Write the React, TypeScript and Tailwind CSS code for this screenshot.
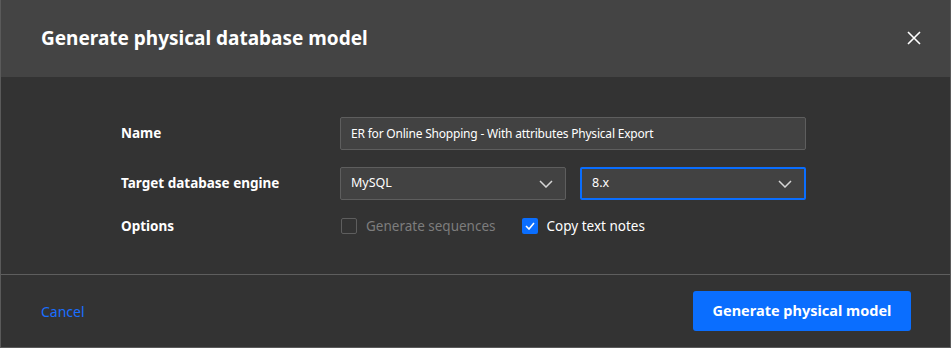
import React, { useState } from 'react';

const font = { fontFamily: '"Noto Sans", "Open Sans", sans-serif' };

function Chevron() {
  return (
    <svg width="14" height="8" viewBox="0 0 14 8" fill="none">
      <path d="M1 1l6 6 6-6" stroke="#d6d6d6" strokeWidth="1.5" />
    </svg>
  );
}

function Select({ value, focused }: { value: string; focused?: boolean }) {
  return (
    <div
      className={`flex h-[33px] w-[226px] items-center justify-between rounded-[2px] bg-[#424242] pl-[10px] pr-[12px] text-[12.5px] text-white ${
        focused ? 'border-2 border-[#0a6eff] pl-[9px] pr-[11px]' : 'border border-[#5e5e5e]'
      }`}
    >
      <span>{value}</span>
      <Chevron />
    </div>
  );
}

export default function App() {
  const [copyNotes, setCopyNotes] = useState(true);

  return (
    <div style={font} className="h-[348px] w-[951px] border-x border-b border-[#5a5a5a] bg-[#333333]">
      {/* Header */}
      <div className="flex h-[77px] items-center justify-between bg-[#444444] pl-[40px] pr-[29px]">
        <h1 className="text-[19px] font-bold text-white">Generate physical database model</h1>
        <button className="mb-[1px] text-white">
          <svg width="14" height="14" viewBox="0 0 14 14">
            <path d="M1 1l12 12M13 1L1 13" stroke="#ffffff" strokeWidth="1.6" />
          </svg>
        </button>
      </div>

      {/* Body */}
      <div className="grid grid-cols-[219px_466px] gap-y-[17px] pb-[40px] pl-[120px] pt-[40px] text-white">
        <div className="flex items-center text-[13.5px] font-bold">Name</div>
        <div className="flex h-[33px] items-center rounded-[2px] border border-[#5e5e5e] bg-[#424242] px-[10px] text-[12px] tracking-[-0.2px]">
          ER for Online Shopping - With attributes Physical Export
        </div>

        <div className="flex items-center text-[13.5px] font-bold">Target database engine</div>
        <div className="flex gap-[14px]">
          <Select value="MySQL" />
          <Select value="8.x" focused />
        </div>

        <div className="flex h-[17px] items-center pt-[1px] text-[13.5px] font-bold leading-[17px]">Options</div>
        <div className="flex h-[17px] items-center pt-[1px] text-[13.5px] leading-[17px]">
          <div className="flex items-center gap-[9px] pl-[1px] text-[#7d7d7d]">
            <span className="h-[16px] w-[16px] rounded-[2px] border border-[#5e5e5e]" />
            Generate sequences
          </div>
          <button
            onClick={() => setCopyNotes(!copyNotes)}
            className="ml-[26px] flex items-center gap-[9px]"
          >
            <span className="flex h-[16px] w-[16px] items-center justify-center rounded-[2px] bg-[#0a6eff]">
              {copyNotes && (
                <svg width="10" height="8" viewBox="0 0 10 8" fill="none">
                  <path d="M1 4l3 3 5-6" stroke="#ffffff" strokeWidth="1.6" />
                </svg>
              )}
            </span>
            Copy text notes
          </button>
        </div>
      </div>

      {/* Footer */}
      <div className="flex h-[73px] items-center justify-between border-t border-[#5e5e5e] pl-[40px] pr-[39px]">
        <button className="text-[14px] text-[#1a6fff]">Cancel</button>
        <button className="h-[40px] w-[218px] rounded-[3px] bg-[#0a6eff] text-[14.5px] font-bold text-white">
          Generate physical model
        </button>
      </div>
    </div>
  );
}
